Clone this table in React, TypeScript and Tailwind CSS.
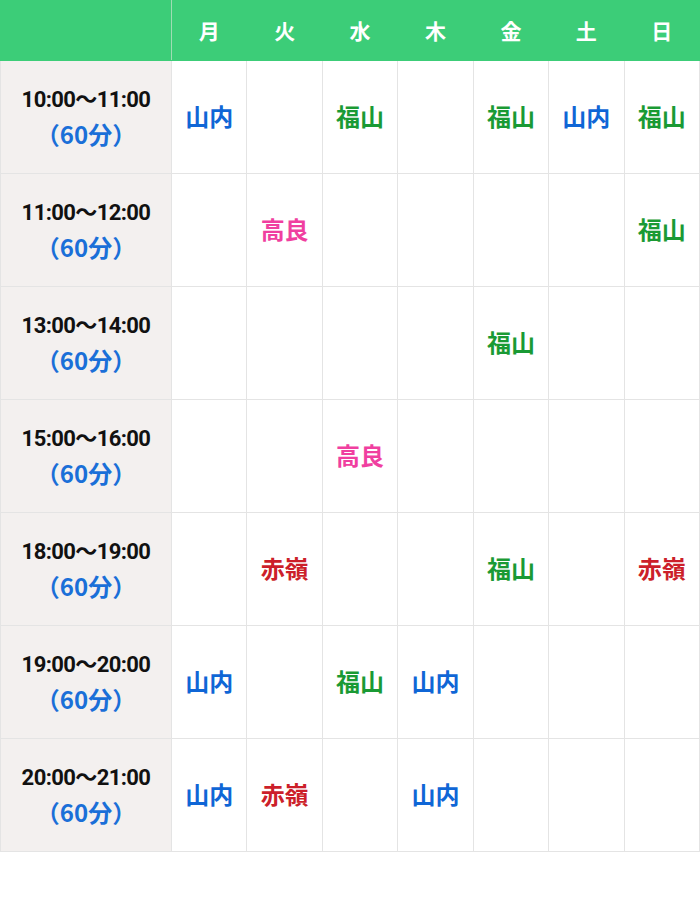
import React from 'react';

type Teacher = '山内' | '福山' | '高良' | '赤嶺' | '';

interface Slot {
  time: string;
  cells: Teacher[];
}

const days = ['月', '火', '水', '木', '金', '土', '日'];

const slots: Slot[] = [
  { time: '10:00〜11:00', cells: ['山内', '', '福山', '', '福山', '山内', '福山'] },
  { time: '11:00〜12:00', cells: ['', '高良', '', '', '', '', '福山'] },
  { time: '13:00〜14:00', cells: ['', '', '', '', '福山', '', ''] },
  { time: '15:00〜16:00', cells: ['', '', '高良', '', '', '', ''] },
  { time: '18:00〜19:00', cells: ['', '赤嶺', '', '', '福山', '', '赤嶺'] },
  { time: '19:00〜20:00', cells: ['山内', '', '福山', '山内', '', '', ''] },
  { time: '20:00〜21:00', cells: ['山内', '赤嶺', '', '山内', '', '', ''] },
];

const teacherColor = (name: Teacher) => {
  switch (name) {
    case '山内':
      return 'text-[#0f66d6]';
    case '福山':
      return 'text-[#1a9a34]';
    case '高良':
      return 'text-[#f03fa0]';
    case '赤嶺':
      return 'text-[#cc1f2a]';
    default:
      return '';
  }
};

export default function App() {
  return (
    <div className="w-[700px] h-[900px] bg-white font-['Roboto','Noto_Sans_CJK_JP',sans-serif]">
      <table className="w-[700px] border-collapse table-fixed">
        <colgroup>
          <col className="w-[171px]" />
          {days.map((d) => (
            <col key={d} />
          ))}
        </colgroup>
        <thead>
          <tr className="h-[60px] bg-[#3ccd78]">
            <th className="border border-[#3ccd78] border-r-[#9fdcb4]" />
            {days.map((d) => (
              <th
                key={d}
                className="border border-[#3ccd78] border-l-[#d5e9dc] text-white text-[21px] font-bold font-['Noto_Sans_CJK_JP',sans-serif]"
              >
                {d}
              </th>
            ))}
          </tr>
        </thead>
        <tbody>
          {slots.map((slot) => (
            <tr key={slot.time} className="h-[113px]">
              <td className="border border-[#e4e4e4] bg-[#f3f0ef] text-center font-bold">
                <div className="text-[22px] leading-[34px] tracking-[-0.6px] text-[#111]">{slot.time}</div>
                <div className="text-[24px] leading-[34px] text-[#1a6fd8] font-['Noto_Sans_CJK_JP',sans-serif]">（60分）</div>
              </td>
              {slot.cells.map((name, i) => (
                <td
                  key={i}
                  className={`border border-[#e4e4e4] pb-[3px] text-center text-[24px] font-bold font-['Noto_Sans_CJK_JP',sans-serif] ${teacherColor(name)}`}
                >
                  {name}
                </td>
              ))}
            </tr>
          ))}
        </tbody>
      </table>
    </div>
  );
}
